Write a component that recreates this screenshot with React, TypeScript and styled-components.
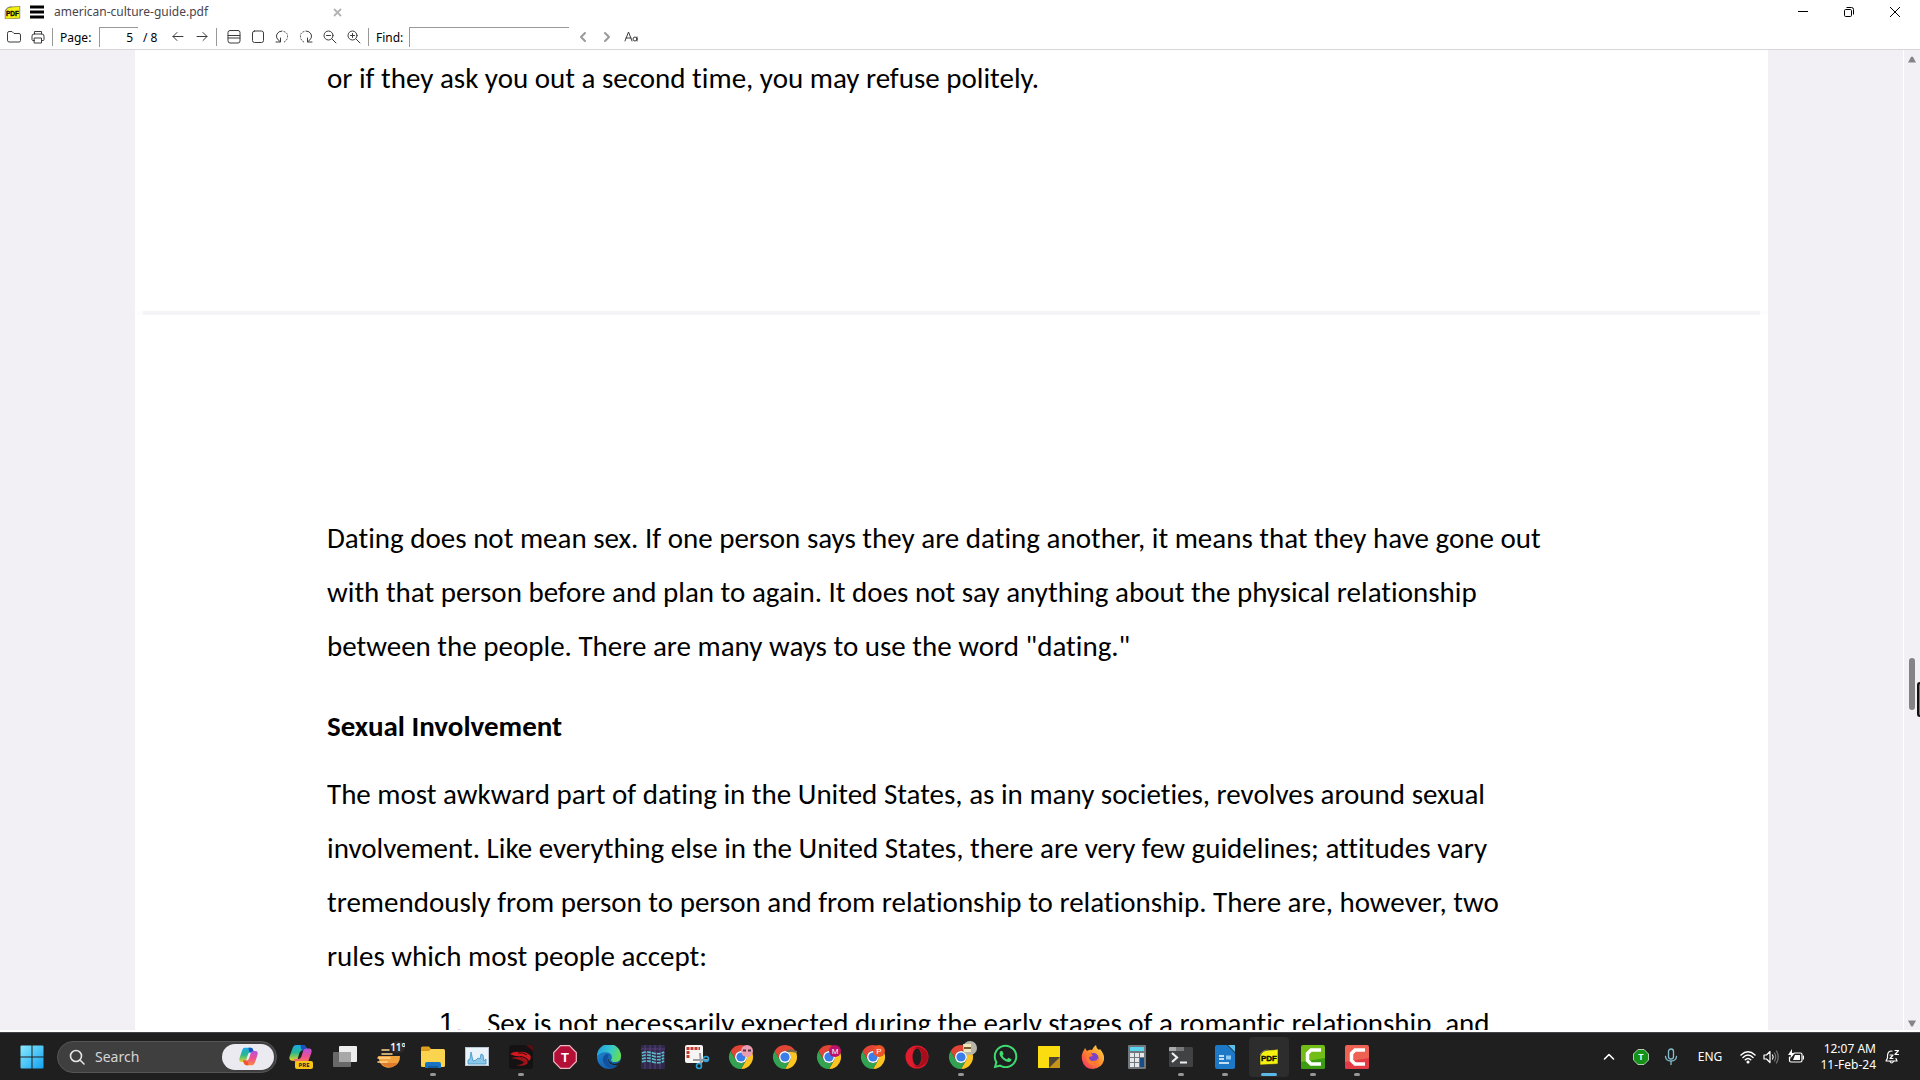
import React, { useState } from "react";
import styled, { createGlobalStyle } from "styled-components";
import { FaWhatsapp } from "react-icons/fa";

const ui = `"Noto Sans", "Open Sans", sans-serif`;
const book = `Carlito, Lato, "Noto Sans", sans-serif`;

const GlobalStyle = createGlobalStyle`
  * { box-sizing: border-box; }
  body { margin: 0; background: #fff; color: #000; font-family: ${ui}; font-size: 12px; }
  button { padding: 0; border: 0; background: none; color: inherit; font: inherit; cursor: pointer; }
  svg { display: block; flex: none; }
`;

const Window = styled.div`
  display: flex;
  flex-direction: column;
  height: 100vh;
  overflow: hidden;
`;

const TitleBar = styled.header`
  display: flex;
  align-items: center;
  flex: none;
  height: 24px;
  padding: 0 2px 0 4px;
`;

const MenuButton = styled.button`
  display: grid;
  place-items: center;
  width: 32px;
  height: 24px;
`;

const Tab = styled.div`
  display: flex;
  align-items: center;
  justify-content: space-between;
  width: 289px;
  padding-left: 1px;
  line-height: 16px;
  color: #4a444b;
`;

const CaptionButtons = styled.div`
  display: flex;
  margin-left: auto;
`;

const CaptionButton = styled.button`
  display: grid;
  place-items: center;
  width: 46px;
  height: 24px;
`;

const Toolbar = styled.nav`
  display: flex;
  align-items: center;
  flex: none;
  height: 26px;
  padding: 0 2px;
  border-bottom: 1px solid #d8d6da;
`;

const ToolButton = styled.button`
  display: grid;
  place-items: center;
  width: 24px;
  height: 24px;
  color: #3c3c3c;
`;

const Separator = styled.span<{ $after?: number }>`
  width: 1px;
  height: 18px;
  margin: 0 ${(p) => p.$after ?? 7}px 0 2px;
  background: #999;
`;

const ToolLabel = styled.label`
  width: 39px;
  padding-top: 2px;
  line-height: 16px;
`;

const FindLabel = styled(ToolLabel)`
  width: 33px;
`;

const Field = styled.input<{ $w: number }>`
  width: ${(p) => p.$w}px;
  height: 20px;
  padding: 1px 5px 0;
  border: solid #999;
  border-width: 1px 0 0 1px;
  outline: 0;
  background: #fff;
  font: 12px ${ui};
  text-align: ${(p) => (p.$w < 100 ? "right" : "left")};
`;

const PageCount = styled.span`
  width: 28px;
  padding: 2px 0 0 5px;
  line-height: 16px;
`;

const FindTools = styled.div`
  display: flex;
  padding-left: 2px;
`;

const Viewer = styled.div`
  display: flex;
  flex: 1;
  min-height: 0;
  background: #f2f0f4;
`;

const Pages = styled.main`
  display: flex;
  flex-direction: column;
  flex: 1;
  min-width: 0;
  padding: 0 135px;
  overflow: hidden;
`;

const PageGap = styled.div`
  flex: none;
  height: 4px;
  border: solid #fdfcfe;
  border-width: 0 8px;
  background: #f4f3f5;
`;

const Page = styled.article<{ $top: number; $bottom: number }>`
  flex: none;
  padding: ${(p) => p.$top}px 192px ${(p) => p.$bottom}px;
  background: #fff;
  font-family: ${book};
  font-size: 29px;
  line-height: 54px;
  font-variant-ligatures: none;
  white-space: nowrap;

  p { margin: 0; }
  h2 { margin: 26px 0 14px; font: inherit; font-weight: 700; }
  ol { margin: 13px 0 0; padding-left: 144px; }
  li::marker { font-family: "Liberation Sans", Arial, sans-serif; }
  li { padding-left: 16px; }
`;

const ScrollBar = styled.aside`
  display: flex;
  flex-direction: column;
  align-items: center;
  justify-content: space-between;
  flex: none;
  width: 17px;
  padding: 6px 0 3px;
  border-left: 1px solid #fff;
`;

const ScrollTrack = styled.div`
  display: flex;
  flex-direction: column;
  flex: 1;
  padding-top: 4px;
`;

const ScrollLead = styled.div`
  height: 62%;
`;

const ScrollThumb = styled.div`
  width: 6px;
  height: 52px;
  border-radius: 3px;
  background: #858386;
`;

const Pointer = styled.div`
  position: fixed;
  top: 682px;
  right: 0;
  width: 3px;
  height: 35px;
  border: 2px solid #111;
  border-right: 0;
  border-radius: 3px 0 0 3px;
  background: #777;
`;

const TaskBar = styled.footer`
  display: flex;
  align-items: center;
  flex: none;
  height: 48px;
  margin-top: 2px;
  padding: 0 12px 0 10px;
  border-top: 1px solid #454347;
  background: #201f20;
  color: #fff;
`;

const AppButton = styled.button<{ $active?: boolean; $open?: boolean }>`
  position: relative;
  display: grid;
  place-items: center;
  width: 40px;
  height: 40px;
  margin: 0 2px;
  border-radius: 4px;
  background: ${(p) => (p.$active ? "#2d2d2e" : "transparent")};

  &::after {
    content: "";
    position: absolute;
    bottom: 1px;
    width: ${(p) => (p.$active ? 16 : 6)}px;
    height: 3px;
    border-radius: 2px;
    background: ${(p) => (p.$active ? "#5bb9ea" : p.$open ? "#969696" : "transparent")};
  }
`;

const SearchBox = styled.label`
  display: flex;
  align-items: center;
  width: 220px;
  height: 32px;
  margin: 0 2px 0 3px;
  padding: 0 2px 0 11px;
  gap: 10px;
  border: 1px solid #555456;
  border-radius: 16px;
  background: #403f40;
`;

const SearchInput = styled.input`
  flex: 1;
  min-width: 0;
  padding: 0;
  border: 0;
  outline: 0;
  background: none;
  color: #fff;
  font: 14px ${ui};
  &::placeholder { color: #d6d5d6; opacity: 1; }
`;

const CopilotPill = styled.button`
  display: grid;
  place-items: center;
  width: 52px;
  height: 26px;
  border-radius: 13px;
  background: #eceaf1;
`;

const Tray = styled.div`
  display: flex;
  align-items: center;
  margin-left: auto;
`;

const TrayButton = styled.button<{ $w?: number }>`
  display: grid;
  place-items: center;
  width: ${(p) => p.$w ?? 32}px;
  height: 40px;
  font-size: 12px;
`;

const Clock = styled.button`
  width: 65px;
  height: 40px;
  font-size: 12px;
  line-height: 16px;
  text-align: right;
  white-space: nowrap;
`;

const Stroke = ({ children, w = 16, sw = 1 }: { children: React.ReactNode; w?: number; sw?: number }) => (
  <svg width={w} height={w} viewBox="0 0 16 16" fill="none" stroke="currentColor" strokeWidth={sw} strokeLinecap="round" strokeLinejoin="round">
    {children}
  </svg>
);

const PdfLogo = ({ w, h }: { w: number; h: number }) => (
  <svg width={w} height={h} viewBox="0 0 20 16">
    <path d="M1 7Q3 1 10 1Q16 1 19 0V15L1 16Z" fill="#f5ef12" stroke="#1d1d10" strokeWidth=".5" />
    <path d="M1 6Q3 1 9 1" fill="none" stroke="#777" strokeWidth="1" />
    <text x="10" y="12" textAnchor="middle" fontFamily="Liberation Sans" fontWeight="700" fontSize="8" stroke="#111" strokeWidth=".4">PDF</text>
  </svg>
);

const Copilot = ({ size = 19 }: { size?: number }) => (
  <svg width={size} height={size} viewBox="0 0 24 24">
    <defs>
      <linearGradient id="cpA" x1="0" y1="0" x2="0" y2="1"><stop stopColor="#1ba8e8" /><stop offset=".5" stopColor="#28b98e" /><stop offset="1" stopColor="#e8d327" /></linearGradient>
      <linearGradient id="cpB" x1="0" y1="0" x2="0" y2="1"><stop stopColor="#b254e0" /><stop offset=".5" stopColor="#ee4f91" /><stop offset="1" stopColor="#fb8a42" /></linearGradient>
    </defs>
    <path d="M7 1H15Q17 1 18 4L19 7H14Q12 7 11 10L9 17Q8 19 6 19H3Q-1 19 1 13L4 4Q5 1 7 1Z" fill="url(#cpA)" />
    <path d="M12 1H15Q17 1 18 4L19 7H15Q13 7 12.600 5Z" fill="#1b4fc4" />
    <path d="M17 23H9Q7 23 6 20L5 17H10Q12 17 13 14L15 7Q16 5 18 5H21Q25 5 23 11L20 20Q19 23 17 23Z" fill="url(#cpB)" />
    <path d="M12 23H9Q7 23 6 20L5 17H9Q11 18 11.400 20Z" fill="#f2552f" />
  </svg>
);

const CopilotPre = () => (
  <svg width="25" height="25" viewBox="0 0 25 25">
    <svg width="23" height="21" viewBox="0 0 24 24" preserveAspectRatio="none">
      <path d="M7 1H15Q17 1 18 4L19 7H14Q12 7 11 10L9 17Q8 19 6 19H3Q-1 19 1 13L4 4Q5 1 7 1Z" fill="url(#cpA)" />
      <path d="M12 1H15Q17 1 18 4L19 7H15Q13 7 12.600 5Z" fill="#1b4fc4" />
      <path d="M17 23H9Q7 23 6 20L5 17H10Q12 17 13 14L15 7Q16 5 18 5H21Q25 5 23 11L20 20Q19 23 17 23Z" fill="url(#cpB)" />
    </svg>
    <rect x="6" y="17" width="18" height="8" rx="2" fill="#fbc518" />
    <text x="15" y="23" textAnchor="middle" fontFamily="Open Sans" fontWeight="700" fontSize="6" fill="#222">PRE</text>
  </svg>
);

const Start = () => (
  <svg width="24" height="24" viewBox="0 0 24 24">
    <defs><linearGradient id="win" x1="0" y1="0" x2="1" y2="1"><stop stopColor="#8aeaff" /><stop offset="1" stopColor="#12a2f0" /></linearGradient></defs>
    <path d="M.5 1.500a1 1 0 0 1 1-1H11.500V11.500H.5ZM12.500.5H22.500a1 1 0 0 1 1 1V11.500H12.500ZM.5 12.500H11.500V23.500H1.500a1 1 0 0 1-1-1ZM12.500 12.500H23.500V22.500a1 1 0 0 1-1 1H12.500Z" fill="url(#win)" />
  </svg>
);

const TaskView = () => (
  <svg width="24" height="24" viewBox="0 0 24 24">
    <rect x="6" y="1" width="18" height="16" rx="1" fill="#eee" />
    <rect x="0" y="7" width="18" height="15" rx="1" fill="#777" fillOpacity=".85" />
    <path d="M6 7H18V17H6Z" fill="#a8a8a8" />
  </svg>
);

const Weather = () => (
  <svg width="32" height="32" viewBox="0 0 32 32">
    <path d="M5 15H27A11 11 0 0 1 7 22Z" fill="#f0a23c" />
    <path d="M8 22H25A11 11 0 0 1 8 22Z" fill="#e07a2c" />
    <path d="M9 9H16M9 13H19M5 17H17M5 21H14" stroke="#ffd690" strokeWidth="1.500" strokeLinecap="round" />
    <rect x="17" y="0" width="15" height="12" rx="6" fill="#2c2c2d" />
    <text x="25" y="10" textAnchor="middle" fontFamily="Open Sans" fontWeight="600" fontSize="10" fill="#fff">11°</text>
  </svg>
);

const Explorer = () => (
  <svg width="24" height="24" viewBox="0 0 24 24">
    <path d="M0 3Q0 1.500 1.500 1.500H8L10 4H23V9H0Z" fill="#e0a11f" />
    <rect y="4" x="0" width="24" height="18" rx="1.500" fill="#fbd44f" />
    <path d="M0 6H8L10 4H0Z" fill="#d99b18" />
    <path d="M4 23V19Q4 17 6 17H18Q20 17 20 19V23Z" fill="#1873c4" />
    <path d="M7 21H17V23H7Z" fill="#125a9e" />
  </svg>
);

const Monitor = () => (
  <svg width="24" height="20" viewBox="0 0 24 20">
    <rect x=".5" y=".5" width="23" height="18" fill="#eaf3fa" stroke="#b9c6cf" />
    <path d="M3 17V13L5 12L6 5L8 14L11 13L13 11L15 12L16 7L18 8L19 14L21 12V17Z" fill="#8cc7e8" stroke="#3e96ca" strokeWidth=".8" />
  </svg>
);

const Dragon = () => (
  <svg width="24" height="24" viewBox="0 0 24 24">
    <rect width="24" height="24" rx="3" fill="#151214" />
    <path d="M17 0H21Q24 0 24 3V6Z" fill="#5a0d14" />
    <path d="M1 9Q5 6 11 7Q16 6 21 10Q23 13 20 16Q18 12 12 11Q7 12 1 9Z" fill="#d31920" />
    <path d="M2 13Q11 11 16 13Q20 16 18 19Q14 22 7 20Q14 20 15 17Q10 14 2 13Z" fill="#a41219" />
    <path d="M9 8Q14 7 18 10" stroke="#3a0708" fill="none" />
  </svg>
);

const OctagonT = ({ size, color, line }: { size: number; color: string; line: string }) => (
  <svg width={size} height={size} viewBox="0 0 24 24">
    <path d="M7.500.7H16.500L23.300 7.500V16.500L16.500 23.300H7.500L.7 16.500V7.500Z" fill={color} stroke={line} strokeWidth="1.200" />
    <text x="12" y="16.500" textAnchor="middle" fontFamily="Liberation Sans" fontWeight="700" fontSize="13" fill="#fff">T</text>
  </svg>
);

const Edge = () => (
  <svg width="24" height="24" viewBox="0 0 24 24">
    <defs>
      <linearGradient id="edA" x1="0" y1=".2" x2="1" y2=".5"><stop stopColor="#239be0" /><stop offset=".55" stopColor="#35c8cd" /><stop offset="1" stopColor="#65dc55" /></linearGradient>
      <linearGradient id="edB" x1="0" y1="0" x2="1" y2="1"><stop stopColor="#1e8fdc" /><stop offset="1" stopColor="#114a93" /></linearGradient>
    </defs>
    <circle cx="12" cy="12" r="12" fill="url(#edB)" />
    <path d="M0 11A12 12 0 0 1 24 11Q24 17 18 17Q13 17 14.500 14Q16 9 11 7.500Q4 6 0 11Z" fill="url(#edA)" />
    <path d="M9 9Q4 13 7 18Q11 25 20 21Q13 22 11 17Q9.500 13 12 10Q10.500 8.500 9 9Z" fill="#124f9c" />
    <path d="M12.500 10Q10 14 13 17Q17 21 23 17Q23 19 21 20Q16 21 13 18.500Q9.500 15 12.500 10Z" fill="#201f20" />
  </svg>
);

const Grid = () => (
  <svg width="24" height="24" viewBox="0 0 24 24">
    <rect width="24" height="24" rx="1" fill="#30294a" />
    <path d="M0 4H24M0 8H24M4 0V24M9 0V24M14 0V24M19 0V24" stroke="#68488c" strokeWidth=".7" />
    <path d="M1 8Q6 6 12 8T23 7M1 11Q6 9 12 11T23 10M1 14Q6 12 12 14T23 13M1 17Q6 15 12 17T23 16" stroke="#59bfc5" strokeWidth="1.600" strokeDasharray="4 1" fill="none" />
  </svg>
);

const Snip = () => (
  <svg width="26" height="26" viewBox="0 0 26 26">
    <rect x="1" y="1" width="18" height="18" rx="2" fill="#f7f4f4" />
    <path d="M4 14V4.500H16" stroke="#c43a28" strokeWidth="3" strokeDasharray="3 1" fill="none" />
    <path d="M16 9L17 20M9 16H25" stroke="#9a9da0" strokeWidth="2" />
    <circle cx="15" cy="22" r="2.500" fill="none" stroke="#2ba1d6" strokeWidth="1.600" />
    <circle cx="22" cy="15" r="2.500" fill="none" stroke="#2ba1d6" strokeWidth="1.600" />
  </svg>
);

type Badge = { fill?: string; letter?: string; kind?: "face" | "cap" | "photo" };
const Chrome = ({ fill, letter, kind }: Badge) => (
  <svg width="32" height="32" viewBox="0 0 32 32">
    <g transform="translate(4 4)">
      <path d="M1.600 6A12 12 0 0 1 22.400 6H12A6 6 0 0 0 6.800 15Z" fill="#e04535" />
      <path d="M22.400 6A12 12 0 0 1 12 24L17.200 15A6 6 0 0 0 12 6Z" fill="#fbc421" />
      <path d="M12 24A12 12 0 0 1 1.600 6L6.800 15A6 6 0 0 0 17.200 15Z" fill="#32a350" />
      <circle cx="12" cy="12" r="6" fill="#fff" />
      <circle cx="12" cy="12" r="4.600" fill="#3b7de9" />
    </g>
    {kind === "photo" && <g><circle cx="25" cy="7" r="7" fill="#b7b5aa" /><path d="M18 3H26V11H19Z" fill="#f1e7bd" /><path d="M19 6H26V8H19Z" fill="#765a32" /></g>}
    {kind === "cap" && <path d="M17 11Q20 7 24 9L28 10V12L23 11Z" fill="#70694c" />}
    {kind === "face" && <g><circle cx="22" cy="10" r="6" fill="#eb9db2" /><path d="M18 9.500H21M23 9.500H26" stroke="#543341" strokeWidth="2" /></g>}
    {letter && <g><circle cx="22" cy="10" r="6" fill={fill} /><text x="22" y="13" textAnchor="middle" fontFamily="Liberation Sans" fontSize="8" fill="#fff">{letter}</text></g>}
  </svg>
);

const Opera = () => (
  <svg width="24" height="24" viewBox="0 0 24 24">
    <circle cx="12" cy="12" r="11.500" fill="#e01c2e" />
    <path d="M8 4Q12 0 17 3Q23 6 23 12T17 21Q12 24 8 20Q13 22 16 18Q18 12 16 6Q13 2 8 4Z" fill="#a70d1b" />
    <ellipse cx="12" cy="12" rx="4.500" ry="8.500" fill="#201f20" />
  </svg>
);

const Firefox = () => (
  <svg width="24" height="24" viewBox="0 0 24 24">
    <defs><linearGradient id="ff" x1="1" y1="0" x2="0" y2="1"><stop stopColor="#ffe34b" /><stop offset=".5" stopColor="#ff8a2c" /><stop offset="1" stopColor="#f0266f" /></linearGradient></defs>
    <path d="M3 5L4 3L6 6Q9 4 11 5Q12 2 15 0Q15 3 18 5L19 4Q24 10 23 15Q21 23 12 24Q3 24 1 15Q0 9 3 5Z" fill="url(#ff)" />
    <circle cx="12.500" cy="13" r="5" fill="#7b42cc" />
    <path d="M5 9Q8 7 12 10Q11 12 8 12Q8 16 12 16Q16 16 17 13Q19 19 12 20Q5 20 5 9Z" fill="#ff7b2d" />
  </svg>
);

const Sticky = () => (
  <svg width="22" height="22" viewBox="0 0 22 22">
    <path d="M0 0H22V11L11 22H0Z" fill="#fbdc11" /><path d="M11 11H22V22H11Z" fill="#c69417" /><path d="M11 11H22L11 22Z" fill="#4c4632" />
  </svg>
);

const Calculator = () => (
  <svg width="18" height="24" viewBox="0 0 18 24">
    <rect width="18" height="24" rx="1" fill="#70777d" /><rect x="2" y="2" width="14" height="4" fill="#5bd4ef" />
    <path d="M2 8H6V12H2ZM7 8H11V12H7ZM12 8H16V12H12ZM2 13H6V17H2ZM7 13H11V17H7ZM2 18H6V22H2ZM7 18H11V22H7Z" fill="#e6e7e9" /><path d="M12 13H16V22H12Z" fill="#174e87" />
  </svg>
);

const Terminal = () => (
  <svg width="24" height="20" viewBox="0 0 24 20">
    <rect width="24" height="20" rx="1.500" fill="#414244" /><path d="M0 4V1Q0 0 1 0H7V4Z" fill="#aaa" /><path d="M7 0H15V4H7Z" fill="#777" />
    <path d="M3 6L8 10.500L3 15M11 15.500H18" stroke="#eee" strokeWidth="2.200" fill="none" />
  </svg>
);

const Writer = () => (
  <svg width="20" height="24" viewBox="0 0 20 24">
    <path d="M2 0H12L20 8V22Q20 24 18 24H2Q0 24 0 22V2Q0 0 2 0Z" fill="#1d78c8" /><path d="M13 0H20V7Z" fill="#57c1ea" />
    <path d="M4 11H9M4 14H9M4 18H14" stroke="#fff" strokeWidth="1.500" /><path d="M11 10.500H16V14.500H11Z" fill="#8bc9f0" />
  </svg>
);

const Camtasia = ({ color, dark }: { color: string; dark: string }) => (
  <svg width="24" height="24" viewBox="0 0 24 24">
    <rect width="24" height="24" rx="2" fill={color} /><path d="M0 17L24 13V22Q24 24 22 24H2Q0 24 0 22Z" fill={dark} />
    <path d="M20 5H10L6.500 8.500V15.500L10 19H20" stroke="#fff" strokeWidth="3.500" fill="none" />
  </svg>
);

const apps: { name: string; icon: React.ReactNode; open?: boolean; active?: boolean }[] = [
  { name: "Copilot", icon: <CopilotPre /> },
  { name: "Task view", icon: <TaskView /> },
  { name: "Weather", icon: <Weather /> },
  { name: "File Explorer", icon: <Explorer />, open: true },
  { name: "Resource Monitor", icon: <Monitor /> },
  { name: "Dragon Center", icon: <Dragon />, open: true },
  { name: "Text tool", icon: <OctagonT size={24} color="#b30f37" line="#efb8c4" /> },
  { name: "Edge", icon: <Edge /> },
  { name: "Sound grid", icon: <Grid /> },
  { name: "Snipping Tool", icon: <Snip /> },
  { name: "Chrome", icon: <Chrome kind="face" /> },
  { name: "Chrome work", icon: <Chrome kind="cap" /> },
  { name: "Chrome M", icon: <Chrome fill="#bc1269" letter="M" /> },
  { name: "Chrome P", icon: <Chrome fill="#ed5228" letter="P" /> },
  { name: "Opera", icon: <Opera /> },
  { name: "Chrome photo", icon: <Chrome kind="photo" />, open: true },
  { name: "WhatsApp", icon: <FaWhatsapp size={27} color="#3edb72" /> },
  { name: "Sticky Notes", icon: <Sticky /> },
  { name: "Firefox", icon: <Firefox /> },
  { name: "Calculator", icon: <Calculator /> },
  { name: "Terminal", icon: <Terminal />, open: true },
  { name: "Writer", icon: <Writer />, open: true },
  { name: "PDF reader", icon: <PdfLogo w={20} h={16} />, active: true },
  { name: "Camtasia", icon: <Camtasia color="#73bd19" dark="#3c9d12" />, open: true },
  { name: "Camtasia Recorder", icon: <Camtasia color="#ee6254" dark="#e43a46" />, open: true },
];

export default function App() {
  const [page, setPage] = useState("5");
  return (
    <Window>
      <GlobalStyle />
      <TitleBar>
        <PdfLogo w={17} h={13} />
        <MenuButton aria-label="Menu">
          <svg width="14" height="14" viewBox="0 0 14 14"><path d="M0 2H14M0 7H14M0 12H14" stroke="#000" strokeWidth="3" /></svg>
        </MenuButton>
        <Tab>
          american-culture-guide.pdf
          <button aria-label="Close tab"><svg width="9" height="9" viewBox="0 0 9 9"><path d="M1 1L8 8M8 1L1 8" stroke="#b5b3b6" strokeWidth="1.800" /></svg></button>
        </Tab>
        <CaptionButtons>
          <CaptionButton aria-label="Minimize"><svg width="10" height="10" viewBox="0 0 10 10"><path d="M0 4.500H10" stroke="#000" /></svg></CaptionButton>
          <CaptionButton aria-label="Restore"><svg width="10" height="10" viewBox="0 0 10 10" fill="none" stroke="#000"><rect x=".5" y="2.500" width="7" height="7" rx="1.200" /><path d="M2.500.5H7.500Q9.500.5 9.500 2.500V7.500" /></svg></CaptionButton>
          <CaptionButton aria-label="Close"><svg width="10" height="10" viewBox="0 0 10 10"><path d="M0 0L10 10M10 0L0 10" stroke="#000" /></svg></CaptionButton>
        </CaptionButtons>
      </TitleBar>

      <Toolbar>
        <ToolButton aria-label="Open"><Stroke><path d="M1.500 4Q1.500 2.500 3 2.500H6L8 4.500H13Q14.500 4.500 14.500 6V11.500Q14.500 13 13 13H3Q1.500 13 1.500 11.500Z" /></Stroke></ToolButton>
        <ToolButton aria-label="Print"><Stroke><path d="M4.500 5V2.500H11.500V5M4.500 11.500H3Q2 11.500 2 10.500V7Q2 5 4 5H12Q14 5 14 7V10.500Q14 11.500 13 11.500H11.500M4.500 9H11.500V14H4.500Z" /></Stroke></ToolButton>
        <Separator />
        <ToolLabel htmlFor="page">Page:</ToolLabel>
        <Field id="page" $w={39} value={page} onChange={(e) => setPage(e.target.value)} />
        <PageCount>/ 8</PageCount>
        <ToolButton aria-label="Previous page"><Stroke><path d="M13 7.500H3M7 3.500L3 7.500L7 11.500" /></Stroke></ToolButton>
        <ToolButton aria-label="Next page"><Stroke><path d="M3 7.500H13M9 3.500L13 7.500L9 11.500" /></Stroke></ToolButton>
        <Separator $after={5} />
        <ToolButton aria-label="Fit width"><Stroke><path d="M2 7.500V3.500Q2 1.500 4 1.500H12Q14 1.500 14 3.500V12Q14 14 12 14H4Q2 14 2 12ZM2 6.500H14M2 9H14" /></Stroke></ToolButton>
        <ToolButton aria-label="Single page"><Stroke><rect x="2.500" y="2" width="11" height="11.500" rx="2" /></Stroke></ToolButton>
        <ToolButton aria-label="Rotate left"><Stroke><path d="M2 13H6.500V9M6 12.500Q1 9 3 5Q4.500 2 8 2" /><path d="M10 2.500Q14 4 13.500 8T9 13.500" strokeDasharray="1 2" /></Stroke></ToolButton>
        <ToolButton aria-label="Rotate right"><Stroke><path d="M14 13H9.500V9M10 12.500Q15 9 13 5Q11.500 2 8 2" /><path d="M6 2.500Q2 4 2.500 8T7 13.500" strokeDasharray="1 2" /></Stroke></ToolButton>
        <ToolButton aria-label="Zoom out"><Stroke><circle cx="6.500" cy="6.500" r="4.500" /><path d="M10 10L14 14M4.500 6.500H8.500" /></Stroke></ToolButton>
        <ToolButton aria-label="Zoom in"><Stroke><circle cx="6.500" cy="6.500" r="4.500" /><path d="M10 10L14 14M4.500 6.500H8.500M6.500 4.500V8.500" /></Stroke></ToolButton>
        <Separator />
        <FindLabel htmlFor="find">Find:</FindLabel>
        <Field id="find" $w={160} />
        <FindTools>
          <ToolButton aria-label="Find previous"><Stroke sw={2}><path d="M10 4L6 8L10 12" stroke="#999" /></Stroke></ToolButton>
          <ToolButton aria-label="Find next"><Stroke sw={2}><path d="M6 4L10 8L6 12" stroke="#999" /></Stroke></ToolButton>
          <ToolButton aria-label="Match case"><Stroke><path d="M2 12L5.500 3L9 12M3 9H8" /><circle cx="12" cy="10" r="2" /><path d="M14 8V12" /></Stroke></ToolButton>
        </FindTools>
      </Toolbar>

      <Viewer>
        <Pages>
          <Page $top={1} $bottom={206}>
            <p>or if they ask you out a second time, you may refuse politely.</p>
          </Page>
          <PageGap />
          <Page $top={196} $bottom={0}>
            <p>
              Dating does not mean sex. If one person says they are dating another, it means that they have gone out<br />
              with that person before and plan to again. It does not say anything about the physical relationship<br />
              between the people. There are many ways to use the word "dating."
            </p>
            <h2>Sexual Involvement</h2>
            <p>
              The most awkward part of dating in the United States, as in many societies, revolves around sexual<br />
              involvement. Like everything else in the United States, there are very few guidelines; attitudes vary<br />
              tremendously from person to person and from relationship to relationship. There are, however, two<br />
              rules which most people accept:
            </p>
            <ol><li>Sex is not necessarily expected during the early stages of a romantic relationship, and</li></ol>
          </Page>
        </Pages>
        <ScrollBar>
          <svg width="8" height="7" viewBox="0 0 8 7"><path d="M0 6.500L3 1Q4 0 5 1L8 6.500Z" fill="#858386" /></svg>
          <ScrollTrack><ScrollLead /><ScrollThumb /></ScrollTrack>
          <svg width="8" height="7" viewBox="0 0 8 7"><path d="M0 .5L3 6Q4 7 5 6L8 .5Z" fill="#858386" /></svg>
        </ScrollBar>
      </Viewer>
      <Pointer />

      <TaskBar>
        <AppButton aria-label="Start"><Start /></AppButton>
        <SearchBox>
          <svg width="16" height="16" viewBox="0 0 16 16" fill="none" stroke="#e4e4e4" strokeWidth="1.600"><circle cx="7" cy="7" r="5.500" /><path d="M11 11L15 15" strokeLinecap="round" /></svg>
          <SearchInput aria-label="Search" placeholder="Search" />
          <CopilotPill aria-label="Ask Copilot"><Copilot /></CopilotPill>
        </SearchBox>
        {apps.map((a) => (
          <AppButton key={a.name} aria-label={a.name} $open={a.open} $active={a.active}>{a.icon}</AppButton>
        ))}
        <Tray>
          <TrayButton aria-label="Hidden icons"><Stroke sw={1.6}><path d="M3.500 10L8 5.500L12.500 10" /></Stroke></TrayButton>
          <TrayButton aria-label="Text tool status"><OctagonT size={16} color="#149116" line="#d9f5d9" /></TrayButton>
          <TrayButton $w={28} aria-label="Microphone"><svg width="16" height="18" viewBox="0 0 16 18" fill="none" stroke="#83bfcc" strokeWidth="1.300" strokeLinecap="round"><rect x="5.500" y="1" width="5" height="10" rx="2.500" /><path d="M2.500 8.500Q3 13 8 13T13.500 8.500M8 13V16.500" /></svg></TrayButton>
          <TrayButton $w={50}>ENG</TrayButton>
          <TrayButton $w={26} aria-label="Wi-Fi"><Stroke sw={1.5}><path d="M1 6Q8-.5 15 6M3 8.500Q8 3.500 13 8.500M5.300 10.800Q8 8 10.700 10.800" /><circle cx="8" cy="13" r=".8" fill="currentColor" /></Stroke></TrayButton>
          <TrayButton $w={20} aria-label="Volume"><Stroke sw={1.2}><path d="M1 6V10H3.500L7 13.500V2.500L3.500 6ZM9.500 6Q11 8 9.500 10" /><path d="M11.500 4Q14 8 11.500 12M13.500 2Q17 8 13.500 14" stroke="#777" /></Stroke></TrayButton>
          <TrayButton $w={30} aria-label="Battery"><Stroke sw={1.2}><path d="M6 4H12.500Q14 4 14 5.500V11.500Q14 13 12.500 13H3Q1.500 13 1.500 11.500V8M15.500 7V10" /><path d="M7 6H12V11H5Z" fill="currentColor" stroke="none" /><path d="M4 0L0 6H3L2 10L7 4H4Z" fill="currentColor" stroke="none" /></Stroke></TrayButton>
          <Clock>12:07 AM<br />11-Feb-24</Clock>
          <TrayButton aria-label="Notifications"><Stroke sw={1.2}><path d="M8 2Q3.500 2 3.500 7V9L2 12H13L12 9.500M6 12.500Q7.500 15.500 9.500 12.500M6 6H9L6 9.500H9M11 1.500H14.500L11 5.500H14.500" /></Stroke></TrayButton>
        </Tray>
      </TaskBar>
    </Window>
  );
}
